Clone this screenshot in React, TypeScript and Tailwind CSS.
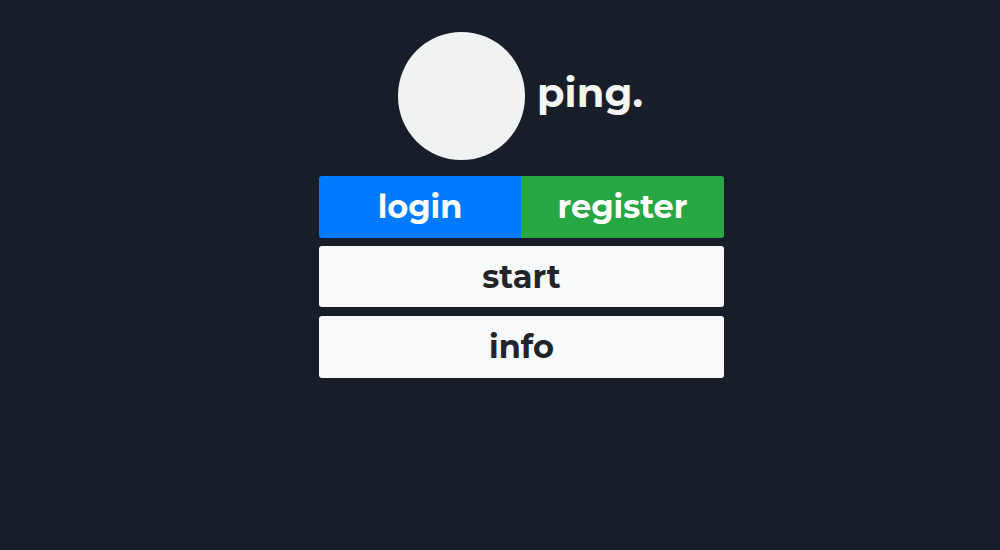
export default function App() {
  const font = { fontFamily: '"Montserrat", "Inter", "Noto Sans", sans-serif' };
  return (
    <div className="w-[1000px] h-[550px] bg-[#181e29] overflow-hidden" style={font}>
      <div className="ml-[319px] w-[405px] pt-[32px] flex flex-col">
        <div className="flex items-center ml-[79px] gap-[12px]">
          <div className="w-[127px] h-[128px] rounded-full bg-[#f0f3f2]" />
          <span className="text-[40px] font-bold text-[#f4f6f6] leading-none -mt-[6px]">ping.</span>
        </div>
        <div className="mt-[16px] flex h-[62px] rounded-[3px] overflow-hidden">
          <button className="w-[202px] bg-[#007bff] text-white text-[32px] font-bold">login</button>
          <button className="flex-1 bg-[#28a745] text-white text-[32px] font-bold">register</button>
        </div>
        <button className="mt-[8px] h-[61px] rounded-[3px] bg-[#f8f9fa] text-[#212529] text-[32px] font-bold">start</button>
        <button className="mt-[9px] h-[62px] rounded-[3px] bg-[#f8f9fa] text-[#212529] text-[32px] font-bold">info</button>
      </div>
    </div>
  );
}
